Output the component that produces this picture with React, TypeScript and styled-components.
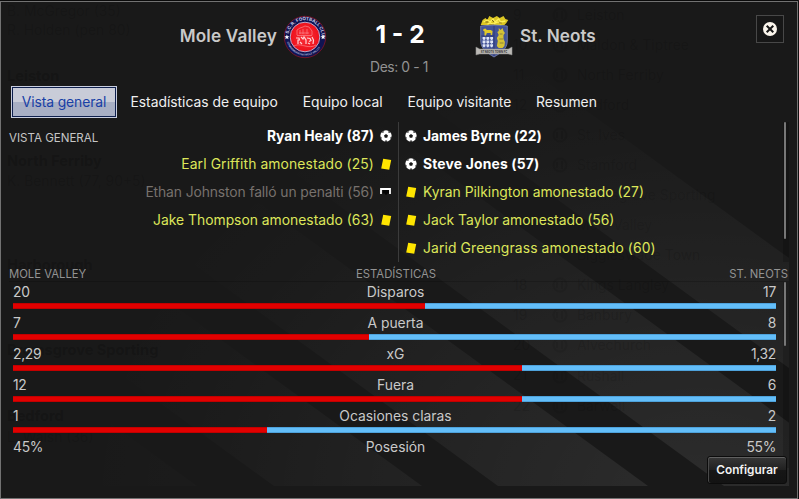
import React from 'react';
import styled, { createGlobalStyle, css } from 'styled-components';

const GlobalStyle = createGlobalStyle`
  * { box-sizing: border-box; }
  body { margin: 0; background: #191919; font-family: Inter, sans-serif; overflow: hidden; }
`;

const Panel = styled.main`
  position: relative;
  display: flex;
  flex-direction: column;
  width: 799px;
  height: 499px;
  padding: 0 10px 0 9px;
  background: #191919;
  color: #c9c9c9;
  font-size: 13.87px;
  isolation: isolate;
`;

const Frame = styled.div`
  position: absolute;
  inset: 1px 1px 0 0;
  border: 1px solid #727272;
  box-shadow: 0 -1px #0a0a0a, 1px 0 #101010;
  pointer-events: none;
`;

const Stripes = styled.svg`
  position: absolute;
  left: 0;
  top: 0;
  z-index: -2;
`;

const Ghost = styled.span<{ $x: number; $y: number; $bold?: boolean }>`
  position: absolute;
  left: ${p => p.$x}px;
  top: ${p => p.$y - 9}px;
  z-index: -1;
  color: rgba(0, 0, 0, ${p => (p.$bold ? 0.17 : 0.11)});
  font-size: ${p => (p.$bold ? 14.6 : 13.87)}px;
  font-weight: ${p => (p.$bold ? 700 : 400)};
  line-height: 18px;
  white-space: nowrap;
`;

const Header = styled.header`
  display: grid;
  grid-template-columns: 268px 48px 148px 47px 1fr 28px;
  height: 86px;
  padding: 15px 5px 0 0;
`;

const Team = styled.h1<{ $right?: boolean; $tracking?: number }>`
  margin: 0;
  padding-top: 10px;
  font-size: 17.2px;
  font-weight: 600;
  line-height: 22px;
  letter-spacing: ${p => p.$tracking ?? 0}px;
  text-align: ${p => (p.$right ? 'right' : 'left')};
  white-space: nowrap;
`;

const Crest = styled.svg<{ $shift: number }>`
  display: block;
  margin-left: ${p => p.$shift}px;
`;

const ScoreBox = styled.div`
  display: flex;
  flex-direction: column;
  align-items: center;
  padding-top: 4px;
`;

const Score = styled.strong`
  padding-left: 2px;
  color: #fff;
  font-size: 24.6px;
  font-weight: 700;
  line-height: 30px;
`;

const HalfTime = styled.span`
  margin-top: 9px;
  color: #929292;
  font-size: 13.87px;
  letter-spacing: -0.4px;
  line-height: 18px;
`;

const CloseButton = styled.button`
  display: grid;
  place-items: center;
  width: 28px;
  height: 28px;
  padding: 0;
  border: 1px solid #484848;
  background: #171717;
`;

const Tabs = styled.nav`
  display: flex;
  gap: 4px;
  height: 36px;
  padding-left: 2px;
`;

const Tab = styled.button<{ $active?: boolean }>`
  height: 32px;
  padding: 0 10.4px;
  border: 0;
  background: none;
  color: #f0f0f0;
  font: 400 13.87px/32px Inter, sans-serif;
  white-space: nowrap;
  ${p => p.$active && css`
    width: 106px;
    margin-right: -1px;
    padding: 0;
    border: 1px solid #c9cede;
    background: linear-gradient(#c9ccd8 50%, #a8afc4 50%);
    box-shadow: inset 0 0 0 1px #0e1f4d;
    color: #1840a6;
    letter-spacing: -0.08px;
    line-height: 30px;
  `}
`;

const Overview = styled.section`
  display: grid;
  grid-template-columns: 389px 1fr 6px;
  height: 140px;
`;

const Caption = styled.h2<{ $align?: string; $dim?: boolean }>`
  margin: 0;
  color: ${p => (p.$dim ? '#939393' : '#c6c6c6')};
  font-size: ${p => (p.$dim ? 11.3 : 11.55)}px;
  font-weight: 400;
  line-height: 16px;
  text-align: ${p => p.$align ?? 'left'};
  white-space: nowrap;
`;

const HomeSide = styled.div`
  display: flex;
  justify-content: space-between;
  padding-right: 6px;
  ${Caption} { padding-top: 8px; }
`;

const AwaySide = styled.div`
  border-left: 1px solid #3b3b3b;
  padding-left: 6px;
`;

const EventList = styled.ul`
  margin: 0;
  padding: 0;
  list-style: none;
`;

type Kind = 'goal' | 'card' | 'miss';
const eventColor = { goal: '#fff', card: '#dde65a', miss: '#77716d' };

const EventRow = styled.li<{ $kind: Kind; $home?: boolean; $tracking?: number }>`
  display: flex;
  flex-direction: ${p => (p.$home ? 'row-reverse' : 'row')};
  align-items: center;
  gap: 6px;
  height: 28px;
  color: ${p => eventColor[p.$kind]};
  font-weight: ${p => (p.$kind === 'goal' ? 700 : 400)};
  letter-spacing: ${p => p.$tracking ?? 0}px;
  white-space: nowrap;
`;

const ScrollTrack = styled.div<{ $thumb: number }>`
  width: 6px;
  height: 100%;
  background: rgba(0, 0, 0, 0.16);
  &::before {
    content: '';
    display: block;
    width: 2px;
    height: ${p => p.$thumb}px;
    margin-left: 1px;
    border-radius: 1px;
    background: #777;
  }
`;

const StatsHeader = styled.div`
  display: grid;
  grid-template-columns: 258px 258px 1fr;
  height: 20px;
  padding: 4px 1px 0 0;
  border-bottom: 1px solid rgba(0, 0, 0, 0.18);
`;

const StatsBody = styled.section`
  display: grid;
  grid-template-columns: 767px 1fr 6px;
  height: 172px;
`;

const StatRows = styled.div`
  padding-left: 4px;
`;

const StatRow = styled.div`
  height: 31px;
  padding-top: 1px;
`;

const StatText = styled.div`
  display: grid;
  grid-template-columns: 1fr 1fr 1fr;
  height: 20px;
  line-height: 18px;
  span:nth-child(1) { letter-spacing: -0.3px; }
  span:nth-child(2) { text-align: center; padding-left: 2px; }
  span:nth-child(3) { text-align: right; letter-spacing: -0.3px; }
`;

const Bar = styled.div<{ $home: number }>`
  display: grid;
  grid-template-columns: ${p => p.$home}px 1fr;
  height: 6px;
`;

const BarPart = styled.i<{ $away?: boolean }>`
  background: ${p => (p.$away ? '#63bef9' : '#e20000')};
  border-top: 1px solid ${p => (p.$away ? '#4ea2db' : '#c20000')};
  border-bottom: 1px solid ${p => (p.$away ? '#4ea2db' : '#c20000')};
`;

const Footer = styled.footer`
  display: flex;
  justify-content: flex-end;
  padding: 2px 2px 0 0;
`;

const ConfigButton = styled.button`
  width: 80px;
  height: 28px;
  padding: 0;
  border: 1px solid #0c0c0c;
  border-radius: 3px;
  background: linear-gradient(#373737, #202020 50%, #161616 52%, #131313);
  box-shadow: inset 0 1px #606060, inset 1px 0 #494949;
  color: #f2f2f2;
  font: 600 11.8px/25px Inter, sans-serif;
`;

const ghosts: { x: number; y: number; t: string; bold?: boolean }[] = [
  { x: 7, y: 11, t: 'B. McGregor (35)' },
  { x: 7, y: 30, t: 'R. Holden (pen 80)' },
  { x: 7, y: 76, t: 'Leiston', bold: true },
  { x: 7, y: 161, t: 'North Ferriby', bold: true },
  { x: 7, y: 181, t: 'K. Bennett (77, 90+5)' },
  { x: 7, y: 265, t: 'Harborough', bold: true },
  { x: 7, y: 350, t: 'Bromsgrove Sporting', bold: true },
  { x: 7, y: 416, t: 'Bedford', bold: true },
  { x: 7, y: 437, t: 'L. Walsh (36)' },
  { x: 577, y: 15, t: 'Leiston' },
  { x: 577, y: 45, t: 'Maldon & Tiptree' },
  { x: 577, y: 75, t: 'North Ferriby' },
  { x: 577, y: 105, t: 'Bedford' },
  { x: 577, y: 135, t: 'St. Ives' },
  { x: 577, y: 165, t: 'Stamford' },
  { x: 577, y: 195, t: 'Bromsgrove Sporting' },
  { x: 577, y: 225, t: 'Mole Valley' },
  { x: 577, y: 255, t: 'Biggleswade Town' },
  { x: 577, y: 285, t: 'Kings Langley' },
  { x: 577, y: 315, t: 'Banbury' },
  { x: 577, y: 345, t: 'Alvechurch' },
  { x: 577, y: 376, t: 'Rushall' },
  { x: 577, y: 406, t: 'Barwell' },
  { x: 513, y: 15, t: '9' },
  { x: 513, y: 45, t: '10' },
  { x: 513, y: 75, t: '11' },
  { x: 513, y: 105, t: '12' },
  { x: 513, y: 285, t: '18' },
  { x: 513, y: 315, t: '19' },
  { x: 513, y: 345, t: '20' },
  { x: 513, y: 375, t: '21' },
  { x: 513, y: 406, t: '22' },
];

const bands = [[48, 197], [274, 422], [498, 648], [724, 876], [951, 1102]];

const Backdrop = () => (
  <>
    <Stripes width="799" height="499">
      <defs>
        <radialGradient id="glow" gradientUnits="userSpaceOnUse" cx="700" cy="500" r="620" gradientTransform="translate(0 130) scale(1 .74)">
          <stop offset="0" stopColor="#fff" stopOpacity=".085" />
          <stop offset=".5" stopColor="#fff" stopOpacity=".04" />
          <stop offset=".8" stopColor="#fff" stopOpacity=".012" />
          <stop offset="1" stopColor="#fff" stopOpacity="0" />
        </radialGradient>
        <clipPath id="area"><rect x="1" y="2" width="788" height="484" /></clipPath>
      </defs>
      <g clipPath="url(#area)" fill="url(#glow)">
        {bands.map(([a, b]) => (
          <path key={a} d={`M${a} 486H${b}L${b - 640} 20H${a - 640}Z`} />
        ))}
      </g>
      <g fill="none" stroke="#000" strokeOpacity=".08" strokeWidth="2">
        {[15, 45, 75, 105, 135, 165, 285, 315, 345, 376, 406].map(y => (
          <g key={y}><circle cx="560" cy={y} r="6.5" /><path d={`M557 ${y - 3}v6M562 ${y - 4}v8`} /></g>
        ))}
      </g>
    </Stripes>
    {ghosts.map(g => (
      <Ghost key={`${g.x}-${g.y}`} $x={g.x} $y={g.y} $bold={g.bold} aria-hidden>{g.t}</Ghost>
    ))}
  </>
);

const MoleCrest = () => (
  <Crest $shift={6} width="44" height="44" viewBox="0 0 44 44">
    <defs>
      <path id="arcTop" d="M5.200 22a16.800 16.800 0 0 1 33.600 0" />
      <path id="arcBottom" d="M3.400 22a18.600 18.600 0 0 0 37.200 0" />
      <radialGradient id="redDisc"><stop stopColor="#f9313b" /><stop offset="1" stopColor="#ed101b" /></radialGradient>
    </defs>
    <circle cx="22" cy="22" r="20.700" fill="#101452" stroke="#71142b" strokeWidth="1" />
    <circle cx="22" cy="22" r="14.800" fill="url(#redDisc)" stroke="#b9a8cc" strokeWidth="1" />
    <text fill="#c9cbe3" fontSize="4.500" fontWeight="700"><textPath href="#arcTop" startOffset="3">S.C.R. FOOTBALL CLUB</textPath></text>
    <text fill="#a9aed3" fontSize="2.500" fontWeight="700"><textPath href="#arcBottom" startOffset="5">COMMEMORATING MOLE VALLEY</textPath></text>
    <path d="M3.900 19.500l.7 1.700 1.800.1-1.400 1.200.5 1.800-1.600-1-1.600 1 .5-1.800-1.400-1.200 1.800-.1zM40.100 19.500l.7 1.700 1.800.1-1.400 1.200.5 1.800-1.600-1-1.600 1 .5-1.800-1.400-1.200 1.800-.1z" fill="#fff" />
    <g fill="none" stroke="#fb858b" strokeWidth=".7">
      <path d="M14 20v-5l3-2 3-1 2-1 4 1 3 4v4M16 18h10M17 15v4M20 14v5M24 14v5M14 20.500h15" />
      <path d="M11 31c4-2 7-1 11 0s8 1 11-1" />
    </g>
    <path d="M13 23h3l.5 2H15v4M18 22l2 2 1-2 2 3v4M24 23l3 .5 1 2-2 1M29 22l1.500 3-.5 4M17 27l2 2M25 28l2 1" fill="none" stroke="#ffd3d5" strokeWidth="1.200" />
  </Crest>
);

const NeotsCrest = () => (
  <Crest $shift={2} width="38" height="44" viewBox="0 0 40 44" preserveAspectRatio="none">
    <path d="M8 5l3-2 2 2 2-4 4 2 4-2 3 2 4-2 2 3 3 1-2 3-2 2H10L6 10z" fill="#dcc724" />
    <path d="M9 7l4-2 3 2 3-3 2 3 4-3 2 3 5-1M13 9l3-1 3 1 5-2 3 2" stroke="#fff05a" strokeWidth="1.300" fill="none" />
    <path d="M11 7h3M18 5l2 2M25 8h3M15 10h5" stroke="#6b5613" strokeWidth=".9" />
    <path d="M6 11Q20 9 34 11v15c0 8-7 12-14 16C13 38 6 34 6 26z" fill="#435397" stroke="#7d88b5" strokeWidth=".8" />
    <path d="M20 11v30M6.500 21H20" stroke="#26356f" strokeWidth=".8" />
    <path d="M9 14l2-.5 1.500 1.500h4l2 1-.500 4h-1.500v-2h-4l-1 2.500H10v-4l-1.500-1z" fill="#e0c928" />
    <path d="M25 13l2 2 2-2 1 3 1.500 2-1.500 2v4l1.500 3-.5 4-2 2h-4l-2-2 1-5-1-3 2-3-1.500-3 1.500-1z" fill="#d5c236" />
    <path d="M26 19h3M25.500 24h4M26 28h4" stroke="#6d6440" strokeWidth=".7" />
    <g fill="#dfe5f5">
      {[0, 1, 2].map(c => [0, 1, 2].map(r => <path key={`${c}${r}`} d={`M${8 + c * 4} ${22 + r * 3.6}h3v2l-1.500 1.300-1.500-1.300z`} />))}
    </g>
    <path d="M1 32l4 2h30l4-2v8l-4-1H5l-4 1z" fill="#bbb9b5" stroke="#858585" strokeWidth=".5" />
    <text x="6" y="38.300" fontSize="3.800" fontWeight="700" fill="#343434" textLength="28" lengthAdjust="spacingAndGlyphs">ST NEOTS TOWN FC</text>
  </Crest>
);

const EventIcon = ({ kind }: { kind: Kind }) => (
  <svg width="12" height="12" viewBox="0 0 12 12">
    {kind === 'goal' && (
      <>
        <circle cx="6" cy="6" r="5.700" fill="#fff" />
        <path d="M6 4l2 1.400-.8 2.300H4.800L4 5.400zM2.400 1.400l1.800.2-.7 1-1.200.4zM9.800 1.500L8 1.400l.3 1.200 1.500.4zM.2 6.500l1.100.5.5 1.500-1.200.3zM11.800 6.500l-1.100.5-.5 1.500 1.200.3zM5 11.800l.2-1.300h1.700l.2 1.300z" fill="#191919" />
      </>
    )}
    {kind === 'card' && <path d="M3.200.8l8 1.300-2 9.700-8-1.400z" fill="#ffe500" />}
    {kind === 'miss' && (
      <>
        <path d="M3 4h6v4l-1-1-2 2-2-2-1 1z" fill="#050505" />
        <path d="M1 8V3h9v5" fill="none" stroke="#fff" strokeWidth="1.800" />
      </>
    )}
  </svg>
);

type Ev = { kind: Kind; text: string; tracking?: number };
const home: Ev[] = [
  { kind: 'goal', text: 'Ryan Healy (87)' },
  { kind: 'card', text: 'Earl Griffith amonestado (25)', tracking: 0.11 },
  { kind: 'miss', text: 'Ethan Johnston falló un penalti (56)', tracking: -0.11 },
  { kind: 'card', text: 'Jake Thompson amonestado (63)' },
];
const away: Ev[] = [
  { kind: 'goal', text: 'James Byrne (22)', tracking: -0.05 },
  { kind: 'goal', text: 'Steve Jones (57)', tracking: 0.18 },
  { kind: 'card', text: 'Kyran Pilkington amonestado (27)' },
  { kind: 'card', text: 'Jack Taylor amonestado (56)' },
  { kind: 'card', text: 'Jarid Greengrass amonestado (60)', tracking: 0.12 },
];

const Events = ({ items, isHome }: { items: Ev[]; isHome?: boolean }) => (
  <EventList>
    {items.map(e => (
      <EventRow key={e.text} $kind={e.kind} $home={isHome} $tracking={e.tracking}>
        <EventIcon kind={e.kind} />
        <span>{e.text}</span>
      </EventRow>
    ))}
  </EventList>
);

const stats = [
  { label: 'Disparos', home: '20', away: '17', bar: 412 },
  { label: 'A puerta', home: '7', away: '8', bar: 356 },
  { label: 'xG', home: '2,29', away: '1,32', bar: 509 },
  { label: 'Fuera', home: '12', away: '6', bar: 509 },
  { label: 'Ocasiones claras', home: '1', away: '2', bar: 254 },
  { label: 'Posesión', home: '45%', away: '55%' },
];

const tabs = ['Vista general', 'Estadísticas de equipo', 'Equipo local', 'Equipo visitante', 'Resumen'];

export default function App() {
  return (
    <Panel>
      <GlobalStyle />
      <Backdrop />
      <Header>
        <Team $right $tracking={0.15}>Mole Valley</Team>
        <MoleCrest />
        <ScoreBox>
          <Score>1 - 2</Score>
          <HalfTime>Des: 0 - 1</HalfTime>
        </ScoreBox>
        <NeotsCrest />
        <Team>St. Neots</Team>
        <CloseButton aria-label="Cerrar">
          <svg width="14" height="14" viewBox="0 0 14 14">
            <circle cx="7" cy="7" r="7" fill="#fbf5ec" />
            <path d="M3.700 3.700l6.600 6.600M10.300 3.700l-6.600 6.600" stroke="#171717" strokeWidth="2" />
          </svg>
        </CloseButton>
      </Header>
      <Tabs>
        {tabs.map((t, i) => <Tab key={t} $active={i === 0}>{t}</Tab>)}
      </Tabs>
      <Overview>
        <HomeSide>
          <Caption>VISTA GENERAL</Caption>
          <Events items={home} isHome />
        </HomeSide>
        <AwaySide><Events items={away} /></AwaySide>
        <ScrollTrack $thumb={117} />
      </Overview>
      <StatsHeader>
        <Caption $dim>MOLE VALLEY</Caption>
        <Caption $dim $align="center">ESTADÍSTICAS</Caption>
        <Caption $dim $align="right">ST. NEOTS</Caption>
      </StatsHeader>
      <StatsBody>
        <StatRows>
          {stats.map(s => (
            <StatRow key={s.label}>
              <StatText><span>{s.home}</span><span>{s.label}</span><span>{s.away}</span></StatText>
              {s.bar !== undefined && <Bar $home={s.bar}><BarPart /><BarPart $away /></Bar>}
            </StatRow>
          ))}
        </StatRows>
        <span />
        <ScrollTrack $thumb={64} />
      </StatsBody>
      <Footer><ConfigButton>Configurar</ConfigButton></Footer>
      <Frame />
    </Panel>
  );
}
